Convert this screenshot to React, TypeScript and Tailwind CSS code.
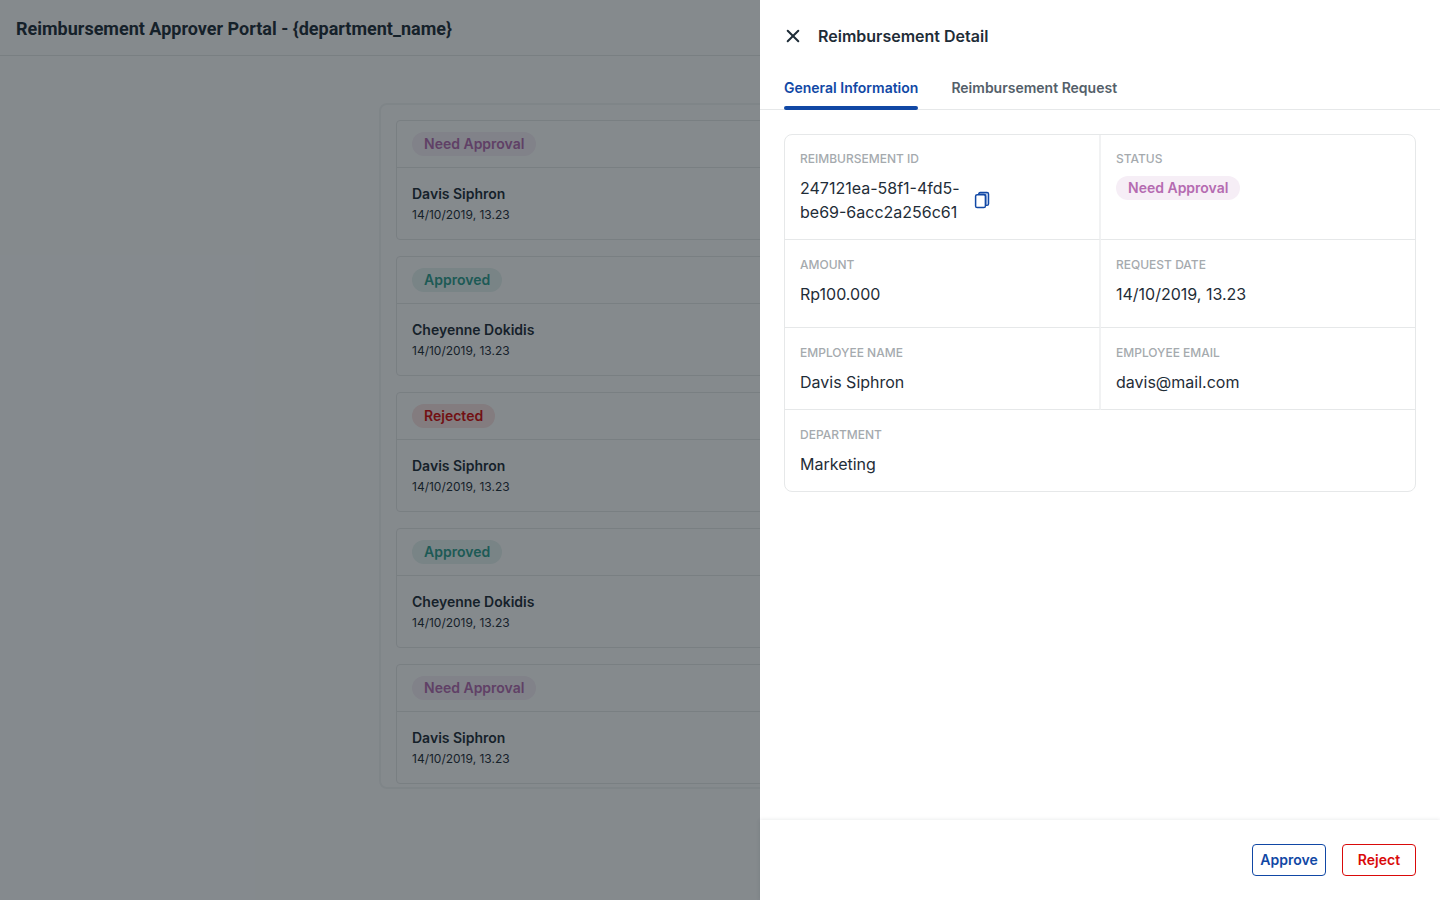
import { useState, type ReactNode } from 'react';

type Status = 'Need Approval' | 'Approved' | 'Rejected';

const badgeStyles: Record<Status, string> = {
  'Need Approval': 'bg-[#f6eef6] text-[#b56bb1]',
  Approved: 'bg-[#e6f2f0] text-[#2f9e8f]',
  Rejected: 'bg-[#fae2e2] text-[#d90a0a]',
};

const requests: { name: string; status: Status }[] = [
  { name: 'Davis Siphron', status: 'Need Approval' },
  { name: 'Cheyenne Dokidis', status: 'Approved' },
  { name: 'Davis Siphron', status: 'Rejected' },
  { name: 'Cheyenne Dokidis', status: 'Approved' },
  { name: 'Davis Siphron', status: 'Need Approval' },
];

const tabs = ['General Information', 'Reimbursement Request'];

function Badge({ status }: { status: Status }) {
  return (
    <span className={`inline-flex h-6 items-center rounded-full px-3 text-sm font-semibold ${badgeStyles[status]}`}>
      {status}
    </span>
  );
}

function RequestCard({ name, status }: { name: string; status: Status }) {
  return (
    <li className="shrink-0 rounded border border-[#e6e8e9]">
      <div className="flex border-b border-[#e6e8e9] px-[15px] py-[11px]">
        <Badge status={status} />
      </div>
      <div className="px-[15px] pt-4 pb-[13px]">
        <p className="text-sm leading-5 font-semibold">{name}</p>
        <p className="text-xs leading-[22px]">14/10/2019, 13.23</p>
      </div>
    </li>
  );
}

function Field({ label, className, children }: { label: string; className: string; children: ReactNode }) {
  return (
    <div className={`px-[15px] ${className}`}>
      <dt className="text-xs leading-[18px] font-medium text-[#a5aaae] uppercase">{label}</dt>
      <dd className="mt-2 text-base leading-6">{children}</dd>
    </div>
  );
}

export default function App() {
  const [active, setActive] = useState(tabs[0]);

  return (
    <div className="relative h-screen overflow-hidden bg-white font-['Inter',sans-serif] text-[#1f2d38]">
      <header className="flex h-14 items-center border-b border-[#e6e8e9] px-4">
        <h1 className="pt-[2px] font-['Roboto',sans-serif] text-lg font-bold">
          Reimbursement Approver Portal - {'{department_name}'}
        </h1>
      </header>
      <main className="mx-auto mt-[47px] max-w-[682px]">
        <ul className="flex flex-col gap-4 rounded-lg border-2 border-[#f3f4f5] px-[15px] pt-[15px] pb-[3px]">
          {requests.map((r, i) => (
            <RequestCard key={i} name={r.name} status={r.status} />
          ))}
        </ul>
      </main>

      <div className="absolute inset-0 bg-[#0b151c]/50" />

      <aside
        role="dialog"
        aria-labelledby="detail-title"
        className="absolute inset-y-0 right-0 flex w-[680px] max-w-full flex-col bg-white"
      >
        <div className="flex h-[72px] items-center gap-4 px-6">
          <button type="button" aria-label="Close" className="flex size-[18px] items-center justify-center">
            <svg viewBox="0 0 18 18" className="size-[18px]" fill="none" stroke="currentColor" strokeWidth="2" strokeLinecap="round">
              <path d="M3.700 3.700l10.600 10.600M14.300 3.700L3.700 14.300" />
            </svg>
          </button>
          <h2 id="detail-title" className="text-base font-semibold">
            Reimbursement Detail
          </h2>
        </div>

        <div role="tablist" className="flex gap-[33px] border-b border-[#e6e8e9] px-6">
          {tabs.map((tab) => (
            <button
              key={tab}
              type="button"
              role="tab"
              aria-selected={tab === active}
              onClick={() => setActive(tab)}
              className={`flex flex-col text-sm font-semibold ${tab === active ? 'text-[#1148a5]' : 'text-[#54606a]'}`}
            >
              <span className="py-[6px] leading-5">{tab}</span>
              <span className={`mt-[2px] -mb-px h-1 w-full rounded-xs ${tab === active ? 'bg-[#1148a5]' : ''}`} />
            </button>
          ))}
        </div>

        <div className="flex-1 overflow-auto p-6">
          <dl className="grid grid-cols-[316fr_314fr] rounded-lg border border-[#e6e8e9]">
            <Field label="Reimbursement ID" className="border-r-2 border-b border-r-[#f1f2f3] border-b-[#e6e8e9] py-[15px]">
              <span className="flex items-center gap-3">
                <span className="w-[162px] break-words">247121ea-58f1-4fd5-be69-6acc2a256c61</span>
                <button type="button" aria-label="Copy reimbursement ID" className="text-[#1148a5]">
                  <svg viewBox="0 0 16 18" className="h-[18px] w-4" fill="none" stroke="currentColor" strokeLinejoin="round">
                    <path d="M4.700 3.300V3Q4.700 1.500 6.200 1.500H13Q14.600 1.500 14.600 3.100V12.700Q14.600 14.300 13 14.300H11.600V5Q11.600 3.300 10 3.300Z" fill="#b9cbea" strokeWidth="1.300" />
                    <rect x="1.600" y="3.700" width="9.800" height="12.800" rx="1.600" fill="white" strokeWidth="1.500" />
                  </svg>
                </button>
              </span>
            </Field>
            <Field label="Status" className="border-b border-[#e6e8e9] py-[15px]">
              <span className="flex">
                <Badge status="Need Approval" />
              </span>
            </Field>
            <Field label="Amount" className="border-r-2 border-b border-r-[#f1f2f3] border-b-[#e6e8e9] pt-4 pb-[21px]">
              Rp100.000
            </Field>
            <Field label="Request Date" className="border-b border-[#e6e8e9] pt-4 pb-[21px]">
              14/10/2019, 13.23
            </Field>
            <Field label="Employee Name" className="border-r-2 border-b border-r-[#f1f2f3] border-b-[#e6e8e9] pt-4 pb-[15px]">
              Davis Siphron
            </Field>
            <Field label="Employee Email" className="border-b border-[#e6e8e9] pt-4 pb-[15px]">
              davis@mail.com
            </Field>
            <Field label="Department" className="col-span-2 pt-4 pb-[15px]">
              Marketing
            </Field>
          </dl>
        </div>

        <footer className="flex justify-end gap-4 p-6 shadow-[0_0_4px_rgba(31,45,56,0.12)]">
          <button type="button" className="h-8 w-[74px] rounded border border-[#1148a5] text-sm font-semibold text-[#1148a5]">
            Approve
          </button>
          <button type="button" className="h-8 w-[74px] rounded border border-[#d90a0a] text-sm font-semibold text-[#d90a0a]">
            Reject
          </button>
        </footer>
      </aside>
    </div>
  );
}
